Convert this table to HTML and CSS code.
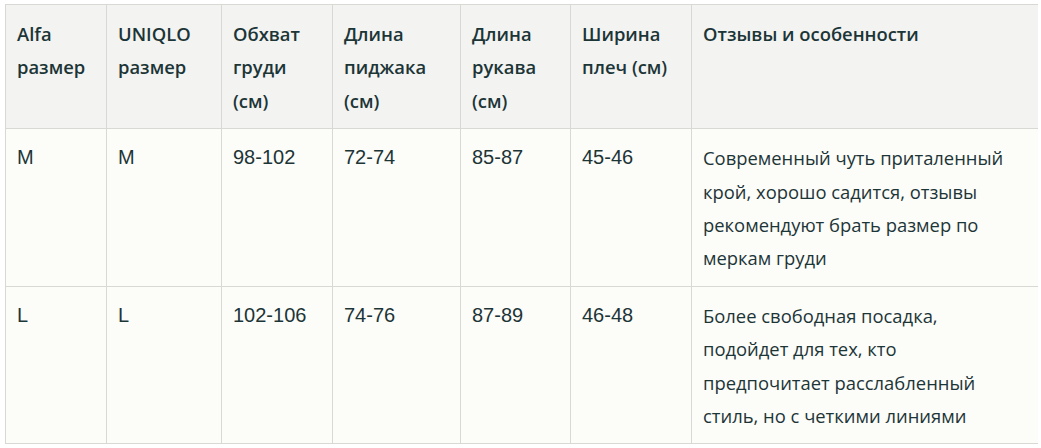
FILE: index.html
```html
<!DOCTYPE html>
<html lang="ru">
<head>
<meta charset="utf-8">
<link rel="stylesheet" href="styles.css">
</head>
<body>
<table class="size-table">
  <colgroup>
    <col class="c1"><col class="c2"><col class="c3"><col class="c4"><col class="c5"><col class="c6"><col class="c7">
  </colgroup>
  <thead>
    <tr>
      <th>Alfa размер</th>
      <th>UNIQLO размер</th>
      <th>Обхват груди (см)</th>
      <th>Длина пиджака (см)</th>
      <th>Длина рукава (см)</th>
      <th>Ширина плеч (см)</th>
      <th>Отзывы и особенности</th>
    </tr>
  </thead>
  <tbody>
    <tr>
      <td class="num">M</td>
      <td class="num">M</td>
      <td class="num">98-102</td>
      <td class="num">72-74</td>
      <td class="num">85-87</td>
      <td class="num">45-46</td>
      <td class="desc">Современный чуть приталенный крой, хорошо садится, отзывы рекомендуют брать размер по меркам груди</td>
    </tr>
    <tr>
      <td class="num">L</td>
      <td class="num">L</td>
      <td class="num">102-106</td>
      <td class="num">74-76</td>
      <td class="num">87-89</td>
      <td class="num">46-48</td>
      <td class="desc">Более свободная посадка, подойдет для тех, кто предпочитает расслабленный стиль, но с четкими линиями</td>
    </tr>
  </tbody>
</table>
</body>
</html>
```
FILE: styles.css
```css
html, body {
  background: #ffffff;
}
body {
  margin: 4px 3px 0 5px;
  font-family: "Open Sans", sans-serif;
  color: #1c3537;
}
.size-table {
  border-collapse: collapse;
  table-layout: fixed;
  width: 1034px;
  font-size: 18.4px;
  line-height: 33.4px;
}
.c1 { width: 101px; }
.c2 { width: 115px; }
.c3 { width: 111px; }
.c4 { width: 128px; }
.c5 { width: 110px; }
.c6 { width: 121px; }
.c7 { width: 348px; }
.size-table th,
.size-table td {
  border: 1px solid #d8d8d5;
  padding: 12px 11px 11px 11px;
  text-align: left;
  vertical-align: top;
}
.size-table th {
  background: #f3f3f1;
  font-weight: 600;
}
.size-table td {
  background: #fcfcf9;
  font-weight: 400;
}
.size-table td.num {
  font-family: "Liberation Sans", Arial, sans-serif;
  font-size: 20px;
}
.size-table td.desc {
  padding-right: 18px;
}
```
